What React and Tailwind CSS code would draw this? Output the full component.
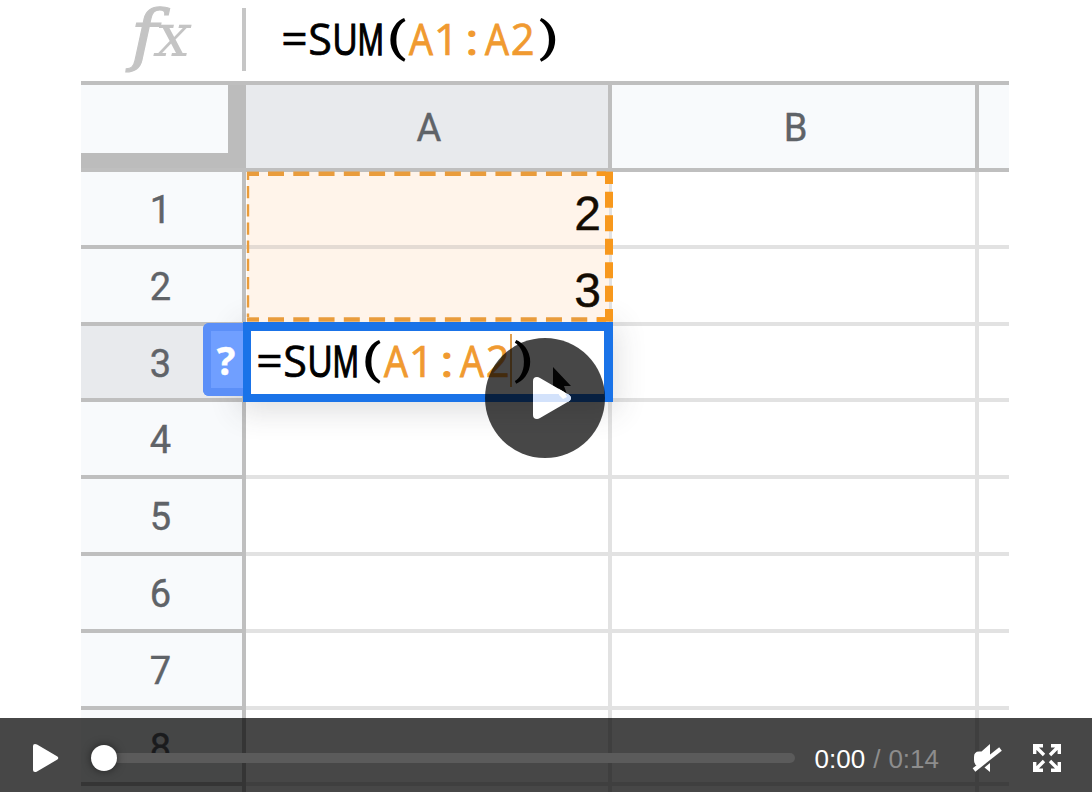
import React from "react";

const ROWS = [
  { n: 1, h: "h-[77px]" },
  { n: 2, h: "h-[77px]" },
  { n: 3, h: "h-[76px]", active: true },
  { n: 4, h: "h-[77px]" },
  { n: 5, h: "h-[77px]" },
  { n: 6, h: "h-[77px]" },
  { n: 7, h: "h-[77px]" },
  { n: 8, h: "h-[76px]" },
  { n: "", h: "h-[77px]" },
];

const ORANGE = "text-[#f09a30]";
const GLYPHS = [
  { c: "=", s: "scale-x-[1.05]" },
  { c: "S", s: "scale-x-[0.98]" },
  { c: "U", s: "scale-x-[0.8] [-webkit-text-stroke:1.1px]" },
  { c: "M", s: "scale-x-[0.67] [-webkit-text-stroke:1.5px]" },
  { c: "(", s: "scale-x-[1.3] scale-y-[0.96] font-[Roboto,sans-serif] translate-x-[1px] [-webkit-text-stroke:0px]" },
  { c: "A", s: "scale-x-[0.86] [-webkit-text-stroke:0.9px]", o: true },
  { c: "1", s: "scale-x-[1]", o: true },
  { c: ":", s: "scale-x-[1.15] [-webkit-text-stroke:1px]", o: true },
  { c: "A", s: "scale-x-[0.86] [-webkit-text-stroke:0.9px]", o: true },
  { c: "2", s: "scale-x-[0.95]", o: true },
  { c: ")", s: "scale-x-[1.3] scale-y-[0.96] font-[Roboto,sans-serif] translate-x-[1px] [-webkit-text-stroke:0px]" },
];

function Formula() {
  return (
    <div className="flex font-['Open_Sans',sans-serif] text-[44px] leading-[60px] font-medium text-black [-webkit-text-stroke:0.7px]">
      {GLYPHS.map((g, i) => (
        <span key={i} className="flex w-[25.3px] justify-center">
          <span className={`${g.s} ${g.o ? ORANGE : ""}`}>{g.c}</span>
        </span>
      ))}
    </div>
  );
}

function RangeOutline() {
  return (
    <svg className="absolute left-[165px] top-[171px]" width="368" height="152" viewBox="246 171 368 152">
      <g fill="none" stroke="#e99c3c">
        <path d="M247 173.8H259" strokeWidth="4.4" />
        <path d="M268 173.8H605" strokeWidth="4.4" strokeDasharray="16 9.27" />
        <path d="M247 319.5H259" strokeWidth="4.4" />
        <path d="M268 319.5H605" strokeWidth="4.4" strokeDasharray="16 9.27" />
        <path d="M248 172V180" strokeWidth="2.4" />
        <path d="M248 186V317" strokeWidth="2.4" strokeDasharray="12.3 5.9" />
      </g>
      <g fill="none" stroke="#f7981d" strokeWidth="8">
        <path d="M609 171.6V184" />
        <path d="M609 191.7V309" strokeDasharray="16 7.5" />
        <path d="M609 309V321.7" />
        <path d="M597 173.8H606M597 319.5H606" strokeWidth="4.4" />
      </g>
    </svg>
  );
}

function Sheet() {
  return (
    <div className="relative flex h-[792px] w-[928px] flex-col overflow-hidden bg-white font-[Roboto,sans-serif] text-[38px] text-[#5f6368] [-webkit-text-stroke:0.4px]">
      <div className="flex h-[81px] shrink-0">
        <div className="relative flex w-[161px] text-[#c4c4c4] [-webkit-text-stroke:1px]">
          <span className="absolute left-[51px] top-[2px] scale-x-[1.13] font-['DejaVu_Serif',serif] text-[67px] leading-[66px] italic">f</span>
          <span className="absolute left-[76px] top-[2px] -skew-x-12 scale-x-[1.03] font-['DejaVu_Serif',serif] text-[60px] leading-[66px] [-webkit-text-stroke:0px]">x</span>
        </div>
        <div className="mt-[8px] h-[63px] w-[4px] bg-[#c6c6c6]" />
        <div className="mt-[7.5px] pl-[36px]">
          <Formula />
        </div>
      </div>

      <div className="flex h-[91px] shrink-0 border-y-4 border-[#bfbfbf]">
        <div className="flex w-[165px] bg-[#bcbcbc]">
          <div className="h-[68px] w-[147px] bg-[#f8fafc]" />
        </div>
        <div className="flex w-[366px] items-center justify-center border-r-4 border-[#bfbfbf] bg-[#e8eaed] pt-[3px] pl-[4px]">A</div>
        <div className="flex w-[367px] items-center justify-center border-r-4 border-[#bfbfbf] bg-[#f8fafc] pt-[3px] pl-[4px]">B</div>
        <div className="flex-1 bg-[#f8fafc]" />
      </div>

      {ROWS.map((r, i) => (
        <div key={i} className={`flex shrink-0 ${r.h}`}>
          <div className={`flex w-[165px] items-center justify-center border-r-4 border-b-4 border-[#bfbfbf] pt-[4px] pr-[2px] ${r.active ? "bg-[#e8eaed]" : "bg-[#f8fafc]"}`}>
            {r.n}
          </div>
          <div className="w-[366px] border-r-4 border-b-4 border-[#e2e2e2]" />
          <div className="w-[367px] border-r-4 border-b-4 border-[#e2e2e2]" />
          <div className="flex-1 border-b-4 border-[#e2e2e2]" />
        </div>
      ))}

      <div className="absolute left-[162px] top-[322px] h-[80px] w-[370px] shadow-[0_6px_28px_4px_rgba(60,64,67,0.16)]" />
      <div className="absolute left-[166px] top-[172px] h-[150px] w-[362px] bg-[#fff4ea]" />
      <div className="absolute left-[166px] top-[245px] h-[4px] w-[362px] bg-[#e4dbd4]" />
      <div className="absolute left-[450px] top-[172px] flex w-[70px] flex-col items-end font-['Liberation_Sans',sans-serif] text-[48px] leading-[77px] text-[#140c02]">
        <div className="pt-[3px]">2</div>
        <div>3</div>
      </div>
      <RangeOutline />

      <div className="absolute left-[122px] top-[323px] flex h-[73px] w-[41px] items-center justify-center rounded-l-[6px] border-y-8 border-l-8 border-[#5b8ff8] bg-[#709fff] font-['Open_Sans',sans-serif] text-[39px] font-bold text-white">
        <span className="mt-[2px] -ml-[3px]">?</span>
      </div>
      <div className="absolute left-[162px] top-[322px] flex h-[80px] w-[370px] border-t-[9.5px] border-r-[9.5px] border-b-[8px] border-l-[8px] border-[#1a73e8] bg-white pl-[6px]">
        <div className="-mt-[1px]">
          <Formula />
        </div>
        <div className="absolute left-[259px] top-[3px] h-[53px] w-[2px] bg-[#e0a050]" />
      </div>
      <svg className="absolute left-[471px] top-[366px]" width="20" height="34" viewBox="0 0 20 34">
        <path d="M1 1V28L7 22L12 33L16 31L12 20H19Z" fill="#111" />
      </svg>
    </div>
  );
}

function BigPlay() {
  return (
    <div className="absolute left-[485px] top-[338px] flex h-[120px] w-[120px] items-center justify-center rounded-full bg-black/72">
      <svg width="120" height="120" viewBox="485 338 120 120">
        <defs>
          <clipPath id="tri">
            <path d="M533 381Q533 377 537 377Q538.5 377 540 378L568.500 394.500Q571 396.200 571 398Q571 400 568.500 401.500L540 418Q538.500 419 537 419Q533 419 533 415Z" />
          </clipPath>
        </defs>
        <g clipPath="url(#tri)">
          <rect x="530" y="374" width="45" height="48" fill="#fff" />
          <rect x="530" y="394" width="45" height="8" fill="#d3e2fb" />
          <path d="M558 390L562 388L567 397L563 399L559 395Z" fill="#fff" />
        </g>
      </svg>
    </div>
  );
}

function Controls() {
  return (
    <div className="absolute inset-x-0 bottom-0 flex h-[74px] items-center bg-black/72 pt-[6px]">
      <svg className="ml-[33px] shrink-0" width="26" height="28" viewBox="0 0 26 28">
        <path d="M0 2Q0 0 2 0Q3 0 4 .6L24 12.200Q25.300 13 25.300 14Q25.300 15 24 15.800L4 27.400Q3 28 2 28Q0 28 0 26Z" fill="#fff" />
      </svg>
      <div className="relative ml-[32px] flex h-[26px] w-[704px] shrink-0 items-center">
        <div className="ml-[13px] h-[10px] w-[691px] rounded-full bg-[#5b5b5b]" />
        <div className="absolute left-0 top-0 h-[26px] w-[26px] rounded-full bg-white shadow-[0_0_8px_rgba(0,0,0,0.5)]" />
      </div>
      <div className="mt-[2px] ml-[19.5px] flex w-[127.5px] shrink-0 items-center justify-between font-['Liberation_Sans',sans-serif] text-[26px] leading-[30px] text-[#8d8d8d]">
        <span className="text-white">0:00</span>
        <span>/</span>
        <span className="mr-[3px]">0:14</span>
      </div>
      <svg className="ml-[30px] shrink-0" width="30" height="30" viewBox="972 743 30 30">
        <path d="M974 757Q974 751.500 979 751.500H981.500L990 744V757L978 766.500Q974 765 974 760Z" fill="#fff" />
        <path d="M984.500 767.500L990 763V772Z" fill="#fff" />
        <path d="M974 770L1000.500 749" stroke="#fff" strokeWidth="4.200" />
      </svg>
      <svg className="ml-[31px] shrink-0" width="28" height="28" viewBox="0 0 28 28">
        <g fill="none" stroke="#fff" strokeWidth="3.400">
          <path d="M0 1.700H10M1.700 0V10M2 2L11 11" />
          <path d="M18 1.700H28M26.300 0V10M26 2L17 11" />
          <path d="M0 26.300H10M1.700 28V18M2 26L11 17" />
          <path d="M18 26.300H28M26.300 28V18M26 26L17 17" />
        </g>
      </svg>
    </div>
  );
}

export default function App() {
  return (
    <div className="relative h-[792px] w-[1092px] overflow-hidden bg-white pl-[81px]">
      <Sheet />
      <BigPlay />
      <Controls />
    </div>
  );
}
